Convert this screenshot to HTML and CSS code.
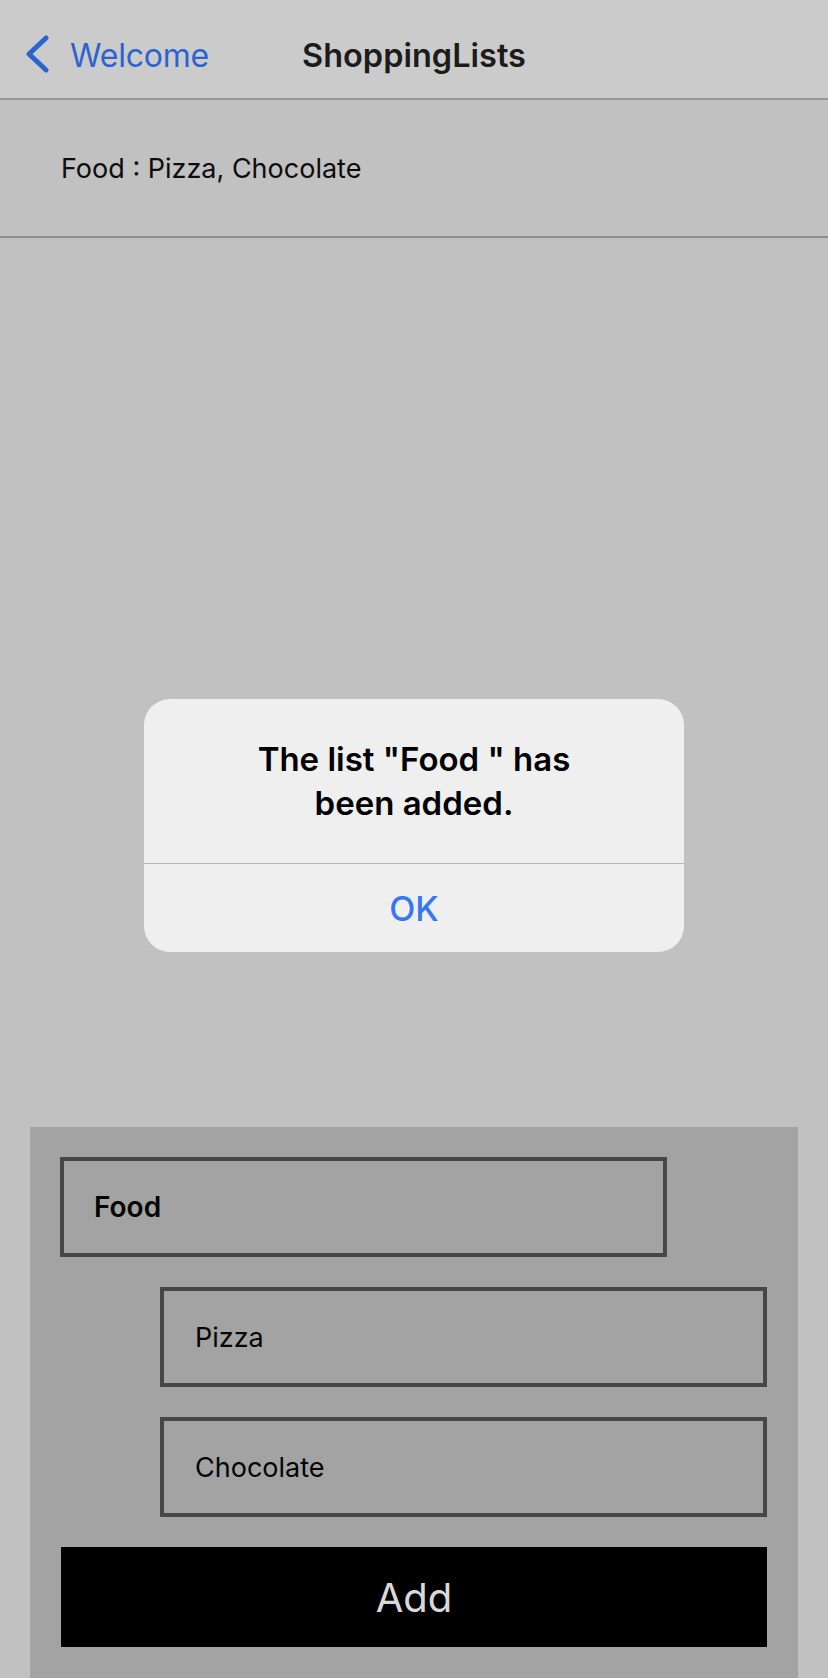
FILE: index.html
```html
<!DOCTYPE html>
<html lang="en">
<head>
<meta charset="utf-8">
<title>ShoppingLists</title>
<link rel="stylesheet" href="styles.css">
</head>
<body>
<div class="screen">
  <header class="navbar">
    <div class="back">
      <svg class="chevron" width="24" height="40" viewBox="0 0 24 40" aria-hidden="true">
        <path d="M20 3 L3 19 L20 35" fill="none" stroke="currentColor" stroke-width="5" stroke-linecap="round" stroke-linejoin="round"/>
      </svg>
      <span class="back-label">Welcome</span>
    </div>
    <div class="nav-title">ShoppingLists</div>
    <div class="nav-spacer"></div>
  </header>

  <ul class="lists">
    <li class="list-row">Food : Pizza, Chocolate</li>
  </ul>

  <main class="content"></main>

  <section class="form">
    <div class="field field-name">Food</div>
    <div class="field field-item">Pizza</div>
    <div class="field field-item">Chocolate</div>
    <button class="add-btn" type="button">Add</button>
  </section>

  <div class="alert" role="alertdialog">
    <div class="alert-title">The list "Food " has<br>been added.</div>
    <div class="alert-actions">
      <button class="alert-btn" type="button">OK</button>
    </div>
  </div>
</div>
</body>
</html>
```

FILE: styles.css
```css
html, body {
  margin: 0;
  padding: 0;
}

body {
  width: 828px;
  height: 1678px;
  overflow: hidden;
  background: #c1c1c1;
  font-family: Inter, "Liberation Sans", sans-serif;
  color: #0a0a0a;
}

.screen {
  position: relative;
  width: 828px;
  height: 1678px;
  display: flex;
  flex-direction: column;
}

/* Navigation bar */
.navbar {
  height: 86px;
  padding-top: 12px;
  background: #cbcbcb;
  border-bottom: 2px solid #979797;
  display: grid;
  grid-template-columns: 1fr auto 1fr;
  align-items: center;
}

.back {
  display: flex;
  align-items: center;
  color: #2b64d0;
  padding-left: 26px;
}

.chevron {
  display: block;
  margin-right: 20px;
}

.back-label {
  font-size: 32px;
  font-weight: 400;
  letter-spacing: -0.2px;
}

.nav-title {
  font-size: 32.5px;
  font-weight: 600;
  color: #1c1c1c;
}

/* List */
.lists {
  list-style: none;
  margin: 0;
  padding: 0;
}

.list-row {
  height: 136px;
  display: flex;
  align-items: center;
  padding-left: 61px;
  font-size: 27px;
  color: #0d0d0d;
  border-bottom: 2px solid #8f8f8f;
}

.content {
  flex: 1;
}

/* Form panel */
.form {
  margin: 0 30px 0 30px;
  background: #a3a3a3;
  padding: 30px 31px 31px 30px;
  display: flex;
  flex-direction: column;
  gap: 30px;
}

.field {
  box-sizing: border-box;
  width: 607px;
  height: 100px;
  border: 4px solid #474747;
  padding-left: 31px;
  display: flex;
  align-items: center;
  font-size: 27px;
  color: #050505;
}

.field-name {
  align-self: flex-start;
  font-weight: 600;
  font-size: 28px;
  padding-left: 30px;
}

.field-item {
  align-self: flex-end;
}

.add-btn {
  height: 100px;
  margin-left: 1px;
  border: none;
  background: #000;
  color: #d9d9d9;
  font-family: Inter, "Liberation Sans", sans-serif;
  font-size: 40px;
  font-weight: 400;
  padding: 0;
}

/* Alert overlay */
.alert {
  position: absolute;
  left: 144px;
  top: 699px;
  width: 540px;
  background: #efefef;
  border-radius: 26px;
  overflow: hidden;
}

.alert-title {
  padding: 38px 20px;
  text-align: center;
  font-size: 33px;
  line-height: 44px;
  font-weight: 600;
  color: #000;
}

.alert-actions {
  border-top: 1px solid #b7b7b7;
  height: 88px;
  display: flex;
}

.alert-btn {
  flex: 1;
  border: none;
  background: transparent;
  color: #3478f6;
  font-family: Inter, "Liberation Sans", sans-serif;
  font-size: 34px;
  font-weight: 500;
  padding: 0;
}
```
